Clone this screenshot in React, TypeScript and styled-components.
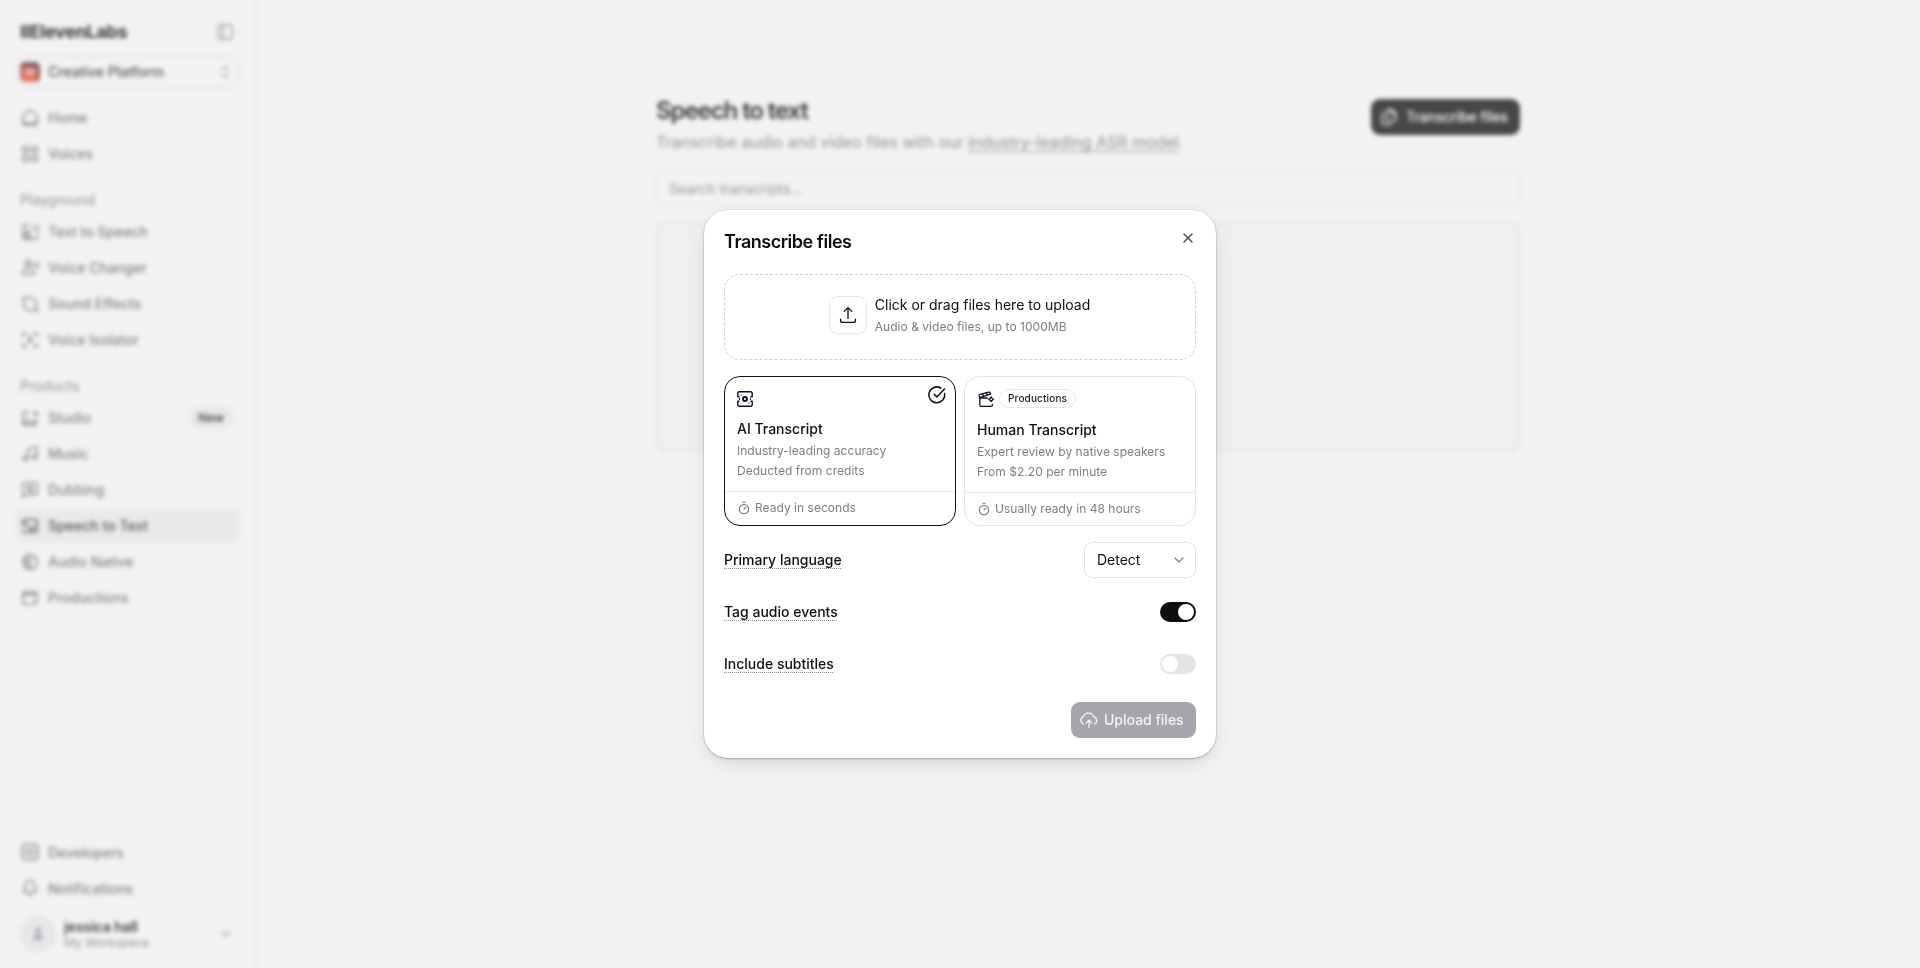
import React from "react";
import styled, { createGlobalStyle } from "styled-components";
import { PanelLeft, ChevronDown, ChevronsUpDown, X, Timer, Bell, Music, Files } from "lucide-react";

const GlobalStyle = createGlobalStyle`
  *, *::before, *::after { box-sizing: border-box; }
  body { margin: 0; background: #fff; overflow: hidden; }
  body, button, input { font-family: Inter, "Liberation Sans", sans-serif; }
  button { margin: 0; padding: 0; border: 0; background: none; color: inherit; }
  svg { display: block; flex: none; }
`;

const Page = styled.div`
  display: flex;
  width: 100vw;
  height: 100vh;
  color: #0f0f10;
  font-size: 14px;
`;

const Sidebar = styled.aside`
  display: flex;
  flex-direction: column;
  width: 256px;
  padding: 16px 15px 12px 16px;
  border-right: 1px solid #ebebed;
`;

const SidebarHeader = styled.header`
  display: flex;
  align-items: center;
  justify-content: space-between;
  height: 32px;
  padding: 0 6px 0 4px;
  color: #7c7c85;
`;

const Wordmark = styled.div`
  padding-bottom: 1px;
  font-size: 18px;
  font-weight: 700;
  letter-spacing: -0.3px;
  color: #000;
`;

const PlatformSelect = styled.button`
  display: flex;
  align-items: center;
  gap: 8px;
  height: 32px;
  margin: 8px 0 13.5px;
  padding: 0 6px 0 3px;
  border: 1px solid #e8e8ea;
  border-radius: 8px;
  font-size: 14px;
  font-weight: 500;
  color: #2c2c30;
  span { margin-top: -1px; }
  svg:last-child { margin-left: auto; color: #9a9aa2; }
`;

const NavGroup = styled.nav`
  display: flex;
  flex-direction: column;
  gap: 4px;
`;

const NavLabel = styled.div`
  height: 20px;
  margin: 20.5px 0 5.5px;
  padding-left: 4px;
  font-size: 14px;
  line-height: 20px;
  color: #81818b;
`;

const NavItem = styled.a<{ $active?: boolean }>`
  display: flex;
  align-items: center;
  gap: 9px;
  height: 32px;
  padding: 0 6px 0 5px;
  border-radius: 8px;
  font-weight: 500;
  color: ${(p) => (p.$active ? "#2a2a2e" : "#6b6b76")};
  background: ${(p) => (p.$active ? "#f2f2f4" : "transparent")};
`;

const NewBadge = styled.span`
  display: flex;
  align-items: center;
  height: 21px;
  margin-left: auto;
  padding: 0 10px 0 9px;
  border-radius: 11px;
  background: #f2f2f4;
  font-size: 12px;
  font-weight: 600;
  color: #1c1c1f;
`;

const Account = styled.div`
  display: flex;
  align-items: center;
  gap: 8px;
  height: 44px;
  margin-top: 8px;
  padding: 0 7px 0 4px;
  color: #8d8d96;
`;

const Avatar = styled.div`
  display: grid;
  place-items: center;
  width: 36px;
  height: 36px;
  border-radius: 50%;
  background: #edeff2;
`;

const AccountText = styled.div`
  flex: 1;
  padding-top: 2px;
  font-size: 12px;
  line-height: 16px;
  color: #81818b;
  strong {
    display: block;
    font-size: 14px;
    font-weight: 600;
    letter-spacing: -0.1px;
    color: #0f0f10;
  }
`;

const Spacer = styled.div`
  flex: 1;
`;

const Main = styled.main`
  flex: 1;
  display: flex;
  justify-content: center;
  padding-top: 95px;
`;

const Content = styled.section`
  width: 864px;
`;

const PageHeader = styled.header`
  display: flex;
  align-items: flex-start;
  justify-content: space-between;
  height: 75px;
`;

const PageTitle = styled.h1`
  margin: 0 0 5px;
  font-size: 24px;
  line-height: 32px;
  font-weight: 600;
  letter-spacing: -1.080px;
  color: #000;
`;

const PageText = styled.p`
  margin: 0;
  font-size: 16px;
  line-height: 20px;
  color: #81818b;
  a { text-decoration: underline; text-underline-offset: 3px; color: #7a7a84; }
`;

const PrimaryButton = styled.button`
  display: flex;
  align-items: center;
  gap: 8px;
  height: 36px;
  margin-top: 4px;
  padding: 0 12px 1px 9px;
  border-radius: 9px;
  background: #0b0b0c;
  color: #fff;
  font-size: 14px;
  font-weight: 500;
  letter-spacing: -0.1px;
`;

const SearchInput = styled.input`
  display: block;
  width: 100%;
  height: 36px;
  padding: 0 12px;
  border: 1px solid #ebebed;
  border-radius: 9px;
  font-size: 14px;
  outline: none;
  &::placeholder { color: #81818b; opacity: 1; }
`;

const EmptyState = styled.div`
  height: 230px;
  margin-top: 16px;
  border: 1px solid #e0e0e9;
  border-radius: 12px;
  background: #fbfbfb;
`;

const Backdrop = styled.div`
  position: fixed;
  inset: 0;
  display: grid;
  place-items: center;
  background: rgba(211, 211, 211, 0.3);
  backdrop-filter: blur(2.3px);
`;

const Dialog = styled.section`
  display: flex;
  flex-direction: column;
  gap: 16px;
  width: 512px;
  height: 548px;
  padding: 20px;
  border-radius: 24px;
  background: #fff;
  font-size: 14px;
  color: #0f0f10;
  box-shadow: 0 0 0 1px rgba(0, 0, 0, 0.05), 0 1px 2px rgba(0, 0, 0, 0.2),
    0 8px 22px -4px rgba(0, 0, 0, 0.12), 0 3px 8px rgba(0, 0, 0, 0.03);
`;

const DialogHeader = styled.header`
  display: flex;
  justify-content: space-between;
  height: 28px;
`;

const DialogTitle = styled.h2`
  margin: 0;
  font-size: 18px;
  line-height: 24px;
  font-weight: 600;
  letter-spacing: -0.470px;
`;

const CloseButton = styled.button`
  width: 16px;
  height: 16px;
  color: #4a4a4f;
`;

const DropZone = styled.div`
  position: relative;
  display: flex;
  align-items: center;
  justify-content: center;
  gap: 8px;
  height: 86px;
  padding: 0 1px 4px 0;
`;

const DropOutline = styled.svg`
  position: absolute;
  inset: 0;
`;

const UploadTile = styled.div`
  display: grid;
  place-items: center;
  width: 38px;
  height: 38px;
  border: 1px solid #e9e9eb;
  border-radius: 8px;
  box-shadow: 0 1px 2px rgba(0, 0, 0, 0.03);
`;

const DropText = styled.div`
  display: grid;
  gap: 1px;
  padding-top: 1px;
  font-size: 14px;
  line-height: 22px;
`;

const Caption = styled.div`
  font-size: 12px;
  line-height: 20px;
  letter-spacing: 0.030px;
  color: #7d7d87;
`;

const Options = styled.div`
  display: flex;
  gap: 8px;
`;

const OptionCard = styled.article<{ $selected?: boolean }>`
  position: relative;
  display: flex;
  flex-direction: column;
  width: 232px;
  height: 150px;
  border: 1px solid ${(p) => (p.$selected ? "#0b1120" : "#e4e4e7")};
  border-radius: 16px;
`;

const OptionBody = styled.div`
  flex: 1;
  padding: 12px 12px 0;
`;

const OptionIcons = styled.div<{ $height: number }>`
  display: flex;
  align-items: center;
  gap: 4px;
  height: ${(p) => p.$height}px;
  color: #0b1120;
`;

const OptionTitle = styled.h3`
  margin: 10px 0 2px;
  font-size: 14px;
  line-height: 20px;
  font-weight: 500;
`;

const OptionFooter = styled.footer<{ $height: number }>`
  display: flex;
  align-items: center;
  gap: 4px;
  height: ${(p) => p.$height}px;
  padding: 0 12px 2px;
  border-top: 1px solid #e8e8ea;
  font-size: 12px;
  letter-spacing: 0.030px;
  color: #7d7d87;
  svg { margin-top: 1px; color: #6b7280; }
`;

const Pill = styled.span`
  display: flex;
  align-items: center;
  height: 19px;
  margin-top: -2px;
  padding: 0 8px 2px;
  border: 1px solid #e8e8ea;
  border-radius: 10px;
  font-size: 10px;
  font-weight: 500;
  letter-spacing: 0.150px;
  color: #1c1c1f;
`;

const SelectedMark = styled.span`
  position: absolute;
  top: 9px;
  right: 9px;
`;

const Setting = styled.div`
  display: flex;
  align-items: center;
  justify-content: space-between;
  height: 36px;
`;

const SettingLabel = styled.span`
  height: 18px;
  margin-bottom: 1px;
  font-weight: 500;
  line-height: 17px;
  background: repeating-linear-gradient(to right, #8d8d96 0 1px, transparent 1px 2px) left bottom / 100% 1px no-repeat;
`;

const SelectBox = styled.button`
  display: flex;
  align-items: center;
  justify-content: space-between;
  width: 112px;
  height: 36px;
  padding: 0 8px 1px 12px;
  border: 1px solid #e2e2e5;
  border-radius: 8px;
  font-size: 14px;
  svg { color: #85858c; }
`;

const Switch = styled.button<{ $on?: boolean }>`
  display: flex;
  justify-content: ${(p) => (p.$on ? "flex-end" : "flex-start")};
  width: 36px;
  height: 20px;
  padding: 2px;
  border-radius: 10px;
  background: ${(p) => (p.$on ? "#0f0f10" : "#e4e4e7")};
`;

const Thumb = styled.span`
  width: 16px;
  height: 16px;
  border-radius: 50%;
  background: #fff;
`;

const UploadButton = styled.button`
  display: flex;
  align-items: center;
  gap: 6px;
  align-self: flex-end;
  width: 125px;
  height: 36px;
  margin-top: 4px;
  padding: 0 0 1px 9px;
  border-radius: 9px;
  background: #a5a5ae;
  color: #f4f4f5;
  font-size: 14px;
  font-weight: 500;
`;

function Glyph({ size = 18, width = 1.5, children }: { size?: number; width?: number; children: React.ReactNode }) {
  return (
    <svg width={size} height={size} viewBox="0 0 20 20" fill="none" stroke="currentColor" strokeWidth={width} strokeLinecap="round" strokeLinejoin="round">
      {children}
    </svg>
  );
}

const icons: Record<string, React.ReactNode> = {
  Home: <path d="M2 9c0-1 .5-2 1.300-2.600l5-4.200a2.600 2.600 0 0 1 3.400 0l5 4.200C17.500 7 18 8 18 9v6.500a2.500 2.500 0 0 1-2.500 2.500h-11A2.500 2.500 0 0 1 2 15.500ZM3 15.500h14" />,
  Voices: <><rect x="2" y="2" width="6" height="6" rx="1" /><rect x="12" y="2" width="6" height="6" rx="1" /><rect x="2" y="12" width="6" height="6" rx="1" /><rect x="12" y="12" width="6" height="6" rx="1" /></>,
  "Text to Speech": <><path d="M9 2H4a2 2 0 0 0-2 2v12a2 2 0 0 0 2 2h12a2 2 0 0 0 2-2v-2M14 4v4M18.500 2v8" /><path d="M5 16v-4h5v4ZM6 8h2v2H6Z" /></>,
  "Voice Changer": <><circle cx="8" cy="5" r="3.200" /><path d="M1.500 17c0-4 3-6.500 6.500-6.500S14.500 13 14.500 17ZM15 5v4M18.500 3v8" /></>,
  "Sound Effects": <><path d="M3 3h8a6 6 0 0 1 6 6v8H9a6 6 0 0 1-6-6Z" /><path d="M2 3h3M16 16l2.500 2" /></>,
  "Voice Isolator": <><path d="M2 6V4a2 2 0 0 1 2-2h2M14 2h2a2 2 0 0 1 2 2v2M18 14v2a2 2 0 0 1-2 2h-2M6 18H4a2 2 0 0 1-2-2v-2" /><circle cx="10" cy="8" r="1.500" /><path d="M7 13c1-2 5-2 6 0" /></>,
  Studio: <><path d="M9 3H4a2 2 0 0 0-2 2v11a2 2 0 0 0 2 2h11a2 2 0 0 0 2-2v-5M14 5h5M16.500 2.500v5M2 14h15M6 14v4M12 14v4M7 8v2" /></>,
  Dubbing: <><path d="M2 18V4a2 2 0 0 1 2-2h12a2 2 0 0 1 2 2v9a2 2 0 0 1-2 2H6Z" /><path d="M10 5v2M7 7h6M12 7c0 2-2 4-4 5M8 9c1 2 3 3 5 3" /></>,
  "Speech to Text": <><path d="M2 9V5a2 2 0 0 1 2-2h12a2 2 0 0 1 2 2v10a2 2 0 0 1-2 2H4a2 2 0 0 1-2-2M2 9c5 0 9 3 11 7M11 14l5-4M5 6h1" /></>,
  "Audio Native": <><circle cx="10" cy="10" r="8" /><path d="M6 3v14M10 2v9M6 11h4v7M3 8h3" /></>,
  Productions: <><path d="M18 11V5a2 2 0 0 0-2-2H4a2 2 0 0 0-2 2v10a2 2 0 0 0 2 2h8M2 7h16M6 3v4M12 3v4M14 15h4M16 13v4" /></>,
  Developers: <><rect x="1.500" y="1.500" width="17" height="17" rx="3" /><path d="M2 10h16M7 6h6M7 14h6" /></>,
};

function NavRow({ name, active, badge }: { name: string; active?: boolean; badge?: string }) {
  return (
    <NavItem $active={active}>
      {name === "Music" ? <Music size={18} strokeWidth={2} /> : name === "Notifications" ? <Bell size={18} strokeWidth={2} /> : <Glyph width={1.700}>{icons[name]}</Glyph>}
      <span>{name}</span>
      {badge && <NewBadge>{badge}</NewBadge>}
    </NavItem>
  );
}

function PlatformLogo() {
  return (
    <svg width="20" height="20" viewBox="0 0 20 20">
      <defs>
        <linearGradient id="platform" x1="0" y1="0" x2="0" y2="1">
          <stop offset="0" stopColor="#32232c" />
          <stop offset=".35" stopColor="#c2453f" />
          <stop offset="1" stopColor="#f0583a" />
        </linearGradient>
      </defs>
      <rect width="20" height="20" rx="5" fill="url(#platform)" />
      <path d="M17 2a5 5 0 0 1 3 4v9a5 5 0 0 1-4 5Z" fill="#5a1f22" opacity=".7" />
      <ellipse cx="10" cy="10" rx="5.500" ry="3.500" fill="#f5a093" />
    </svg>
  );
}

function TicketIcon() {
  return (
    <svg width="16" height="16" viewBox="0 0 16 16" fill="none" stroke="currentColor" strokeWidth="1.400" strokeLinejoin="round" strokeLinecap="round">
      <path d="M2 5.700H.8V2.200A1.400 1.400 0 0 1 2.200.8h11.600a1.400 1.400 0 0 1 1.400 1.400v3.500H14M14 10.300h1.200v3.500a1.400 1.400 0 0 1-1.400 1.400H2.200a1.400 1.400 0 0 1-1.400-1.400v-3.500H2" />
      <path d="M2.500 7.300v1.400M13.500 7.300v1.400" strokeWidth="1" />
      <circle cx="8" cy="8" r="2" strokeWidth="1.900" />
      <path d="M3.900 4h.3M11.800 12h.3" strokeWidth="1.200" />
    </svg>
  );
}

function ClapperIcon() {
  return (
    <svg width="18" height="17" viewBox="-1 0 18 17" fill="none" stroke="currentColor" strokeWidth="1.300" strokeLinejoin="round" strokeLinecap="round">
      <path d="M9.300 7H1.800v7.100c0 .8.5 1.300 1.300 1.300h10c.8 0 1.300-.5 1.300-1.300v-.6" />
      <path d="m1.700 6.700-.5-1.900c-.2-.8.200-1.300.9-1.500L10.700 1.100c.8-.2 1.300.2 1.500.9l.2 1.100L1.700 6.700ZM4 3l2 2.100M7.700 2l2 2" />
      <path d="M13.200 5.800c.4 1.500.9 2 2.400 2.500-1.500.4-2 .9-2.400 2.400-.5-1.500-1-2-2.500-2.400 1.500-.5 2-1 2.500-2.500Z" strokeWidth="1.200" />
    </svg>
  );
}

function CheckIcon() {
  return (
    <svg width="18" height="18" viewBox="0 0 18 18" fill="none" stroke="#0f0f10" strokeWidth="1.500" strokeLinecap="round" strokeLinejoin="round">
      <path d="M16.600 7.500A7.900 7.900 0 1 1 12.800 2" />
      <path d="m6.200 8.300 2.600 2.600L16.500 3" />
    </svg>
  );
}

function UploadIcon() {
  return (
    <svg width="18" height="18" viewBox="0 0 18 18" fill="none" stroke="#0f0f10" strokeWidth="1.300" strokeLinecap="round" strokeLinejoin="round">
      <path d="M9 12.500V1.800M5.200 5.400 9 1.600l3.800 3.800" />
      <path d="M1.500 13.200v1.300c0 1.200.7 1.900 1.900 1.900h11.200c1.200 0 1.900-.7 1.900-1.900v-1.300" />
    </svg>
  );
}

function CloudUploadIcon() {
  return (
    <svg width="18" height="18" viewBox="0 0 18 18" fill="none" stroke="currentColor" strokeWidth="1.300" strokeLinecap="round" strokeLinejoin="round">
      <path d="M3.600 13.100A4 4 0 0 1 3.200 5.700 5.600 5.600 0 0 1 13.600 5.700a3.900 3.900 0 0 1 .9 7.300" />
      <path d="M9 16.300V9.500M6.300 12 9 9.300l2.700 2.700" />
    </svg>
  );
}

export default function App() {
  return (
    <>
      <GlobalStyle />
      <Page>
        <Sidebar>
          <SidebarHeader>
            <Wordmark>IIElevenLabs</Wordmark>
            <PanelLeft size={18} strokeWidth={1.800} />
          </SidebarHeader>
          <PlatformSelect>
            <PlatformLogo />
            <span>Creative Platform</span>
            <ChevronsUpDown size={16} />
          </PlatformSelect>
          <NavGroup>
            <NavRow name="Home" />
            <NavRow name="Voices" />
          </NavGroup>
          <NavLabel>Playground</NavLabel>
          <NavGroup>
            <NavRow name="Text to Speech" />
            <NavRow name="Voice Changer" />
            <NavRow name="Sound Effects" />
            <NavRow name="Voice Isolator" />
          </NavGroup>
          <NavLabel>Products</NavLabel>
          <NavGroup>
            <NavRow name="Studio" badge="New" />
            <NavRow name="Music" />
            <NavRow name="Dubbing" />
            <NavRow name="Speech to Text" active />
            <NavRow name="Audio Native" />
            <NavRow name="Productions" />
          </NavGroup>
          <Spacer />
          <NavGroup>
            <NavRow name="Developers" />
            <NavRow name="Notifications" />
          </NavGroup>
          <Account>
            <Avatar>
              <svg width="14" height="16" viewBox="0 0 14 16" fill="#a0a3aa"><circle cx="7" cy="4.500" r="3" /><path d="M2 14c0-4 2-6 5-6s5 2 5 6Z" /></svg>
            </Avatar>
            <AccountText>
              <strong>jessica hall</strong>
              My Workspace
            </AccountText>
            <ChevronDown size={14} strokeWidth={2.500} />
          </Account>
        </Sidebar>
        <Main>
          <Content>
            <PageHeader>
              <div>
                <PageTitle>Speech to text</PageTitle>
                <PageText>
                  Transcribe audio and video files with our <a>industry-leading ASR model</a>.
                </PageText>
              </div>
              <PrimaryButton>
                <Files size={18} />
                <span>Transcribe files</span>
              </PrimaryButton>
            </PageHeader>
            <SearchInput placeholder="Search transcripts..." />
            <EmptyState />
          </Content>
        </Main>
      </Page>
      <Backdrop>
        <Dialog>
          <DialogHeader>
            <DialogTitle>Transcribe files</DialogTitle>
            <CloseButton aria-label="Close"><X size={16} strokeWidth={2} /></CloseButton>
          </DialogHeader>
          <DropZone>
            <DropOutline width="472" height="86" fill="none">
              <rect x=".5" y=".5" width="471" height="85" rx="15.500" stroke="#d0d0d4" strokeDasharray="3 2" />
            </DropOutline>
            <UploadTile><UploadIcon /></UploadTile>
            <DropText>
              Click or drag files here to upload
              <Caption>Audio &amp; video files, up to 1000MB</Caption>
            </DropText>
          </DropZone>
          <Options>
            <OptionCard $selected>
              <OptionBody>
                <OptionIcons $height={20}><TicketIcon /></OptionIcons>
                <OptionTitle>AI Transcript</OptionTitle>
                <Caption>Industry-leading accuracy</Caption>
                <Caption>Deducted from credits</Caption>
              </OptionBody>
              <OptionFooter $height={34}><Timer size={14} strokeWidth={1.800} />Ready in seconds</OptionFooter>
              <SelectedMark><CheckIcon /></SelectedMark>
            </OptionCard>
            <OptionCard>
              <OptionBody>
                <OptionIcons $height={21}><ClapperIcon /><Pill>Productions</Pill></OptionIcons>
                <OptionTitle>Human Transcript</OptionTitle>
                <Caption>Expert review by native speakers</Caption>
                <Caption>From $2.20 per minute</Caption>
              </OptionBody>
              <OptionFooter $height={33}><Timer size={14} strokeWidth={1.800} />Usually ready in 48 hours</OptionFooter>
            </OptionCard>
          </Options>
          <Setting>
            <SettingLabel>Primary language</SettingLabel>
            <SelectBox>Detect<ChevronDown size={16} strokeWidth={2} /></SelectBox>
          </Setting>
          <Setting>
            <SettingLabel>Tag audio events</SettingLabel>
            <Switch $on aria-label="Tag audio events"><Thumb /></Switch>
          </Setting>
          <Setting>
            <SettingLabel>Include subtitles</SettingLabel>
            <Switch aria-label="Include subtitles"><Thumb /></Switch>
          </Setting>
          <UploadButton><CloudUploadIcon />Upload files</UploadButton>
        </Dialog>
      </Backdrop>
    </>
  );
}
